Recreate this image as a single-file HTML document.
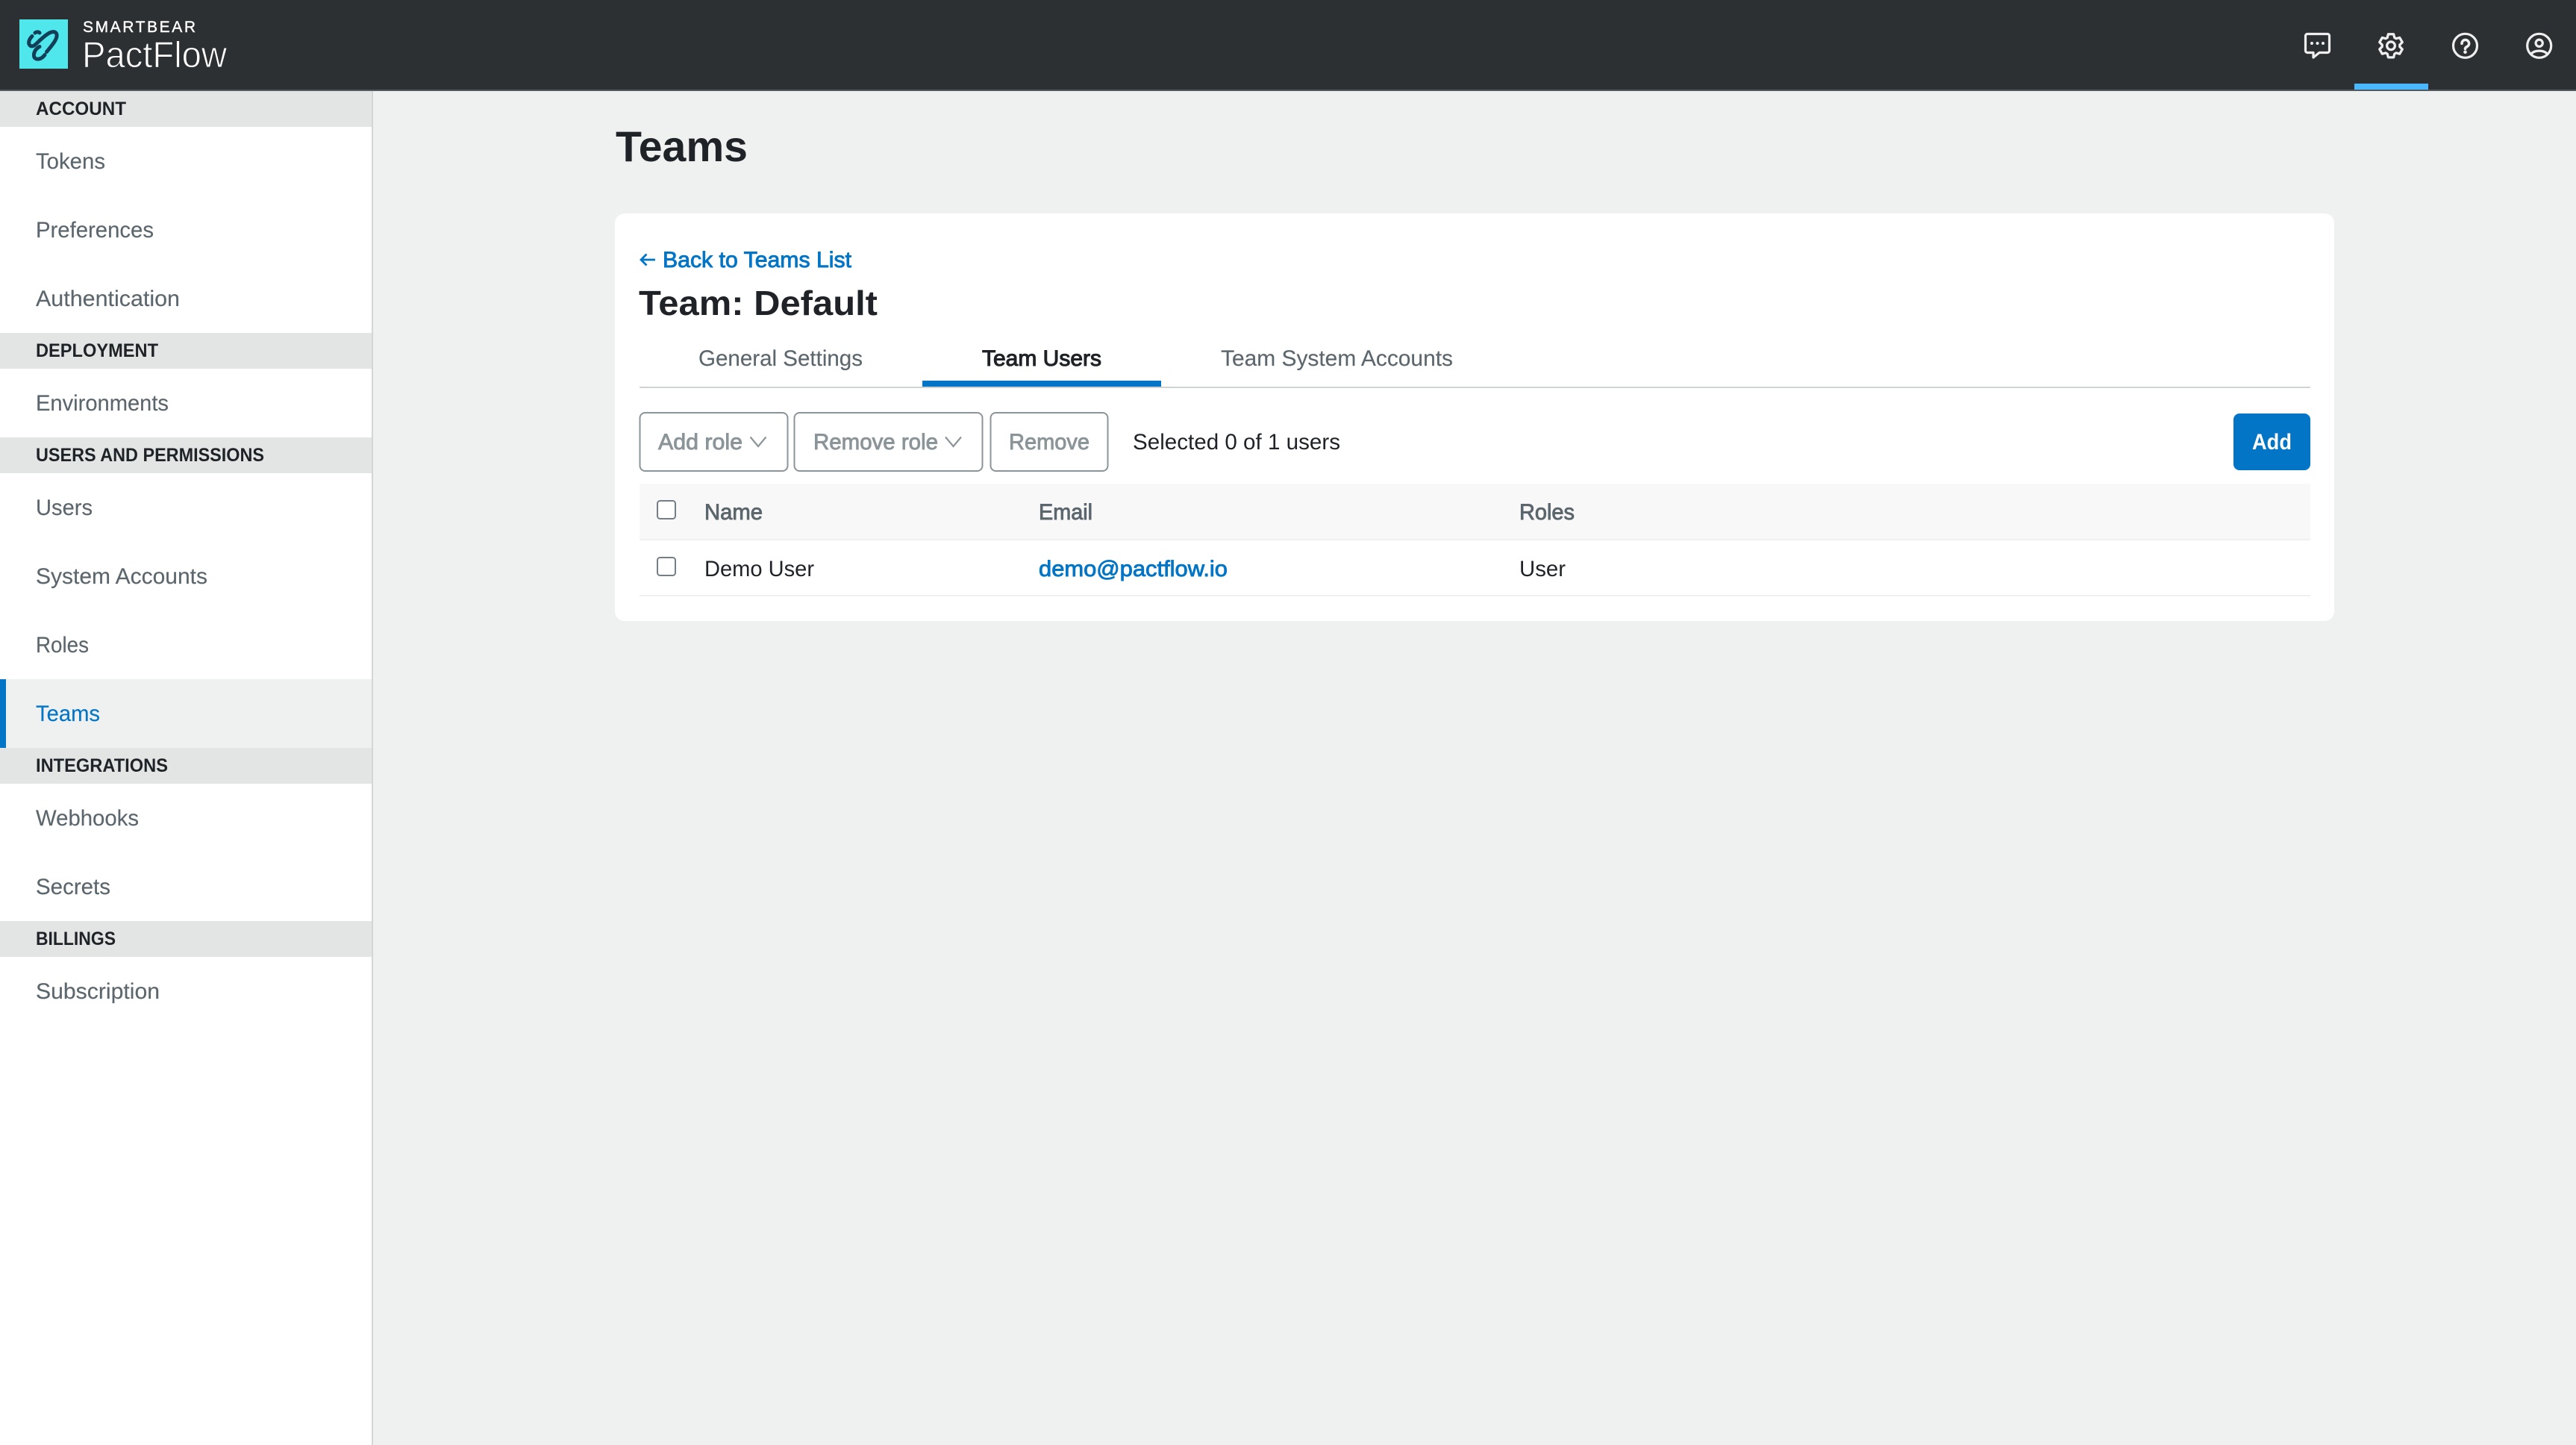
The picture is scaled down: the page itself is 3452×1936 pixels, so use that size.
<!DOCTYPE html>
<html lang="en">
<head>
<meta charset="utf-8">
<title>Teams - PactFlow</title>
<style>
html,body{margin:0;padding:0;width:3452px;height:1936px;overflow:hidden;background:#eff1f0}
svg{display:block}
text{font-family:"Liberation Sans",Arial,sans-serif;stroke-width:0;white-space:pre}
.i{font-size:30px;fill:#5b666d;stroke:#5b666d;stroke-width:.15}
.s{font-size:24.6px;font-weight:700;fill:#1f2327}
.b{font-size:30px;fill:#0275c6;stroke:#0275c6;stroke-width:.9}
.g{font-size:30px;fill:#8b9599;stroke:#8b9599;stroke-width:.9}
.h{font-size:30px;fill:#5b666d;stroke:#5b666d;stroke-width:.9}
.k{font-size:30px;fill:#1f2327}
.btn{fill:#fff;stroke:#8b9599;stroke-width:2}
.chev{fill:none;stroke:#8b9599;stroke-width:2.2}
.cb{fill:#fff;stroke:#747e84;stroke-width:2}
.ic{fill:none;stroke:#eeeeee;stroke-width:3.2;stroke-linejoin:round;stroke-linecap:round}
.logo{fill:none;stroke:#123f57;stroke-width:5;stroke-linecap:round;stroke-linejoin:round}
</style>
</head>
<body>
<svg xmlns="http://www.w3.org/2000/svg" width="3452" height="1936" viewBox="0 0 3452 1936">
<rect width="3452" height="1936" fill="#eff1f0"/>

<!-- sidebar -->
<rect x="0" y="122" width="498" height="1814" fill="#fff"/>
<rect x="498" y="122" width="2" height="1814" fill="#d3d6d5"/>
<rect x="0" y="122" width="498" height="48" fill="#e3e5e4"/>
<rect x="0" y="446" width="498" height="48" fill="#e3e5e4"/>
<rect x="0" y="586" width="498" height="48" fill="#e3e5e4"/>
<rect x="0" y="1002" width="498" height="48" fill="#e3e5e4"/>
<rect x="0" y="1234" width="498" height="48" fill="#e3e5e4"/>
<rect x="0" y="910" width="498" height="92" fill="#eff1f0"/>
<rect x="0" y="910" width="8" height="92" fill="#0275c6"/>

<text class="s" x="48" y="154" textLength="121" lengthAdjust="spacingAndGlyphs">ACCOUNT</text>
<text class="i" x="48" y="226" textLength="93" lengthAdjust="spacingAndGlyphs">Tokens</text>
<text class="i" x="48" y="318" textLength="158" lengthAdjust="spacingAndGlyphs">Preferences</text>
<text class="i" x="48" y="410" textLength="193" lengthAdjust="spacingAndGlyphs">Authentication</text>
<text class="s" x="48" y="478" textLength="164" lengthAdjust="spacingAndGlyphs">DEPLOYMENT</text>
<text class="i" x="48" y="550" textLength="178" lengthAdjust="spacingAndGlyphs">Environments</text>
<text class="s" x="48" y="618" textLength="306" lengthAdjust="spacingAndGlyphs">USERS AND PERMISSIONS</text>
<text class="i" x="48" y="690" textLength="76" lengthAdjust="spacingAndGlyphs">Users</text>
<text class="i" x="48" y="782" textLength="230" lengthAdjust="spacingAndGlyphs">System Accounts</text>
<text class="i" x="48" y="874" textLength="71" lengthAdjust="spacingAndGlyphs">Roles</text>
<text class="i" x="48" y="966" textLength="86" lengthAdjust="spacingAndGlyphs" style="fill:#0275c6;stroke:#0275c6">Teams</text>
<text class="s" x="48" y="1034" textLength="177" lengthAdjust="spacingAndGlyphs">INTEGRATIONS</text>
<text class="i" x="48" y="1106" textLength="138" lengthAdjust="spacingAndGlyphs">Webhooks</text>
<text class="i" x="48" y="1198" textLength="100" lengthAdjust="spacingAndGlyphs">Secrets</text>
<text class="s" x="48" y="1266" textLength="107" lengthAdjust="spacingAndGlyphs">BILLINGS</text>
<text class="i" x="48" y="1338" textLength="166" lengthAdjust="spacingAndGlyphs">Subscription</text>

<!-- header -->
<rect x="0" y="0" width="3452" height="120" fill="#2c3033"/>
<rect x="0" y="120" width="3452" height="2" fill="#505a5f"/>
<rect x="26" y="26" width="65" height="66" fill="#4fe6ec"/>
<path class="logo" d="M47 44C49 42.5 51.5 42.5 53 44"/>
<path class="logo" d="M43 48.5C38.5 53 37 59 41 61.5C45 63.5 49 58 54 53.5C60 48 68 41 73.500 43C77.500 45 76.500 50 73.500 55C71 59.500 66 65 62.500 69.500"/>
<path class="logo" d="M53 62.500C48 65 45 70 45.500 75C46 79 50 80 54 78.500C56.500 77.500 58.500 75.500 60 73.500"/>
<text x="111" y="43" font-size="21" fill="#fff" stroke="#fff" style="stroke-width:.4" textLength="151" lengthAdjust="spacing">SMARTBEAR</text>
<text x="110" y="90" font-size="49" fill="#fff" stroke="#2c3033" style="stroke-width:1" textLength="194" lengthAdjust="spacingAndGlyphs">PactFlow</text>

<path class="ic" d="M3092 45.5h27a2.500 2.500 0 0 1 2.500 2.500v20a2.500 2.500 0 0 1-2.500 2.500h-11l-8 6.500v-6.500h-8a2.500 2.500 0 0 1-2.500-2.500v-20a2.500 2.500 0 0 1 2.500-2.500z"/>
<circle cx="3098" cy="58" r="2" fill="#eee"/><circle cx="3105.500" cy="58" r="2" fill="#eee"/><circle cx="3113" cy="58" r="2" fill="#eee"/>

<g transform="translate(3204 61.3) scale(1.03)">
<path class="ic" d="M-4.68-10.5L-3.49-15.1H3.49L4.68-10.5L6.76-9.3L11.34-10.57L14.82-4.53L11.44-1.2V1.2L14.82 4.53L11.34 10.57L6.76 9.3L4.68 10.5L3.49 15.1H-3.49L-4.68 10.5L-6.76 9.3L-11.34 10.57L-14.82 4.53L-11.44 1.2V-1.2L-14.82-4.53L-11.34-10.57L-6.76-9.3Z"/>
<circle class="ic" cx="0" cy="0" r="5.2"/>
</g>

<rect x="3155" y="112" width="99" height="8" fill="#4ab8ff"/>

<g transform="translate(3303.5 61.3)">
<circle class="ic" cx="0" cy="0" r="16"/>
<path class="ic" style="stroke-width:3.6" d="M-4.5-3a4.800 4.800 0 1 1 7 4.200c-1.700.9-2.500 1.600-2.500 3"/>
<circle cx="0" cy="8.500" r="2.300" fill="#eee"/>
</g>
<g transform="translate(3402.7 61.3)">
<circle class="ic" cx="0" cy="0" r="16"/>
<circle class="ic" cx="0" cy="-3.6" r="4.600"/>
<path class="ic" d="M-11 11.4c2-3 6-4.600 11-4.600s9 1.600 11 4.600"/>
</g>

<!-- page title -->
<text x="825" y="216" font-size="57.5" font-weight="700" fill="#1f2327" textLength="177" lengthAdjust="spacingAndGlyphs">Teams</text>

<!-- card -->
<rect x="824" y="286" width="2304" height="546" rx="13" fill="#fff"/>

<path d="M859 348h19M866.500 340.500L859 348l7.500 7.500" fill="none" stroke="#0275c6" stroke-width="2.800"/>
<text class="b" x="888" y="358" textLength="253" lengthAdjust="spacingAndGlyphs">Back to Teams List</text>
<text x="856" y="422" font-size="46" font-weight="700" fill="#1f2327" textLength="320" lengthAdjust="spacingAndGlyphs">Team: Default</text>

<!-- tabs -->
<text class="i" x="936" y="490" textLength="220" lengthAdjust="spacingAndGlyphs">General Settings</text>
<text class="k" x="1316" y="490" textLength="160" lengthAdjust="spacingAndGlyphs" style="stroke:#1f2327;stroke-width:1.1">Team Users</text>
<text class="i" x="1636" y="490" textLength="311" lengthAdjust="spacingAndGlyphs">Team System Accounts</text>
<rect x="857" y="518" width="2239" height="2" fill="#d0d3d2"/>
<rect x="1236" y="510" width="320" height="8" fill="#0275c6"/>

<!-- toolbar -->
<rect class="btn" x="857.500" y="553" width="198" height="78" rx="7"/>
<text class="g" x="882" y="602" textLength="113" lengthAdjust="spacingAndGlyphs">Add role</text>
<path class="chev" d="M1005.500 585.500L1016 598L1026.500 585.500"/>
<rect class="btn" x="1064.500" y="553" width="252" height="78" rx="7"/>
<text class="g" x="1090" y="602" textLength="167" lengthAdjust="spacingAndGlyphs">Remove role</text>
<path class="chev" d="M1267 585.500L1277.500 598L1288 585.500"/>
<rect class="btn" x="1327.500" y="553" width="157" height="78" rx="7"/>
<text class="g" x="1352" y="602" textLength="108" lengthAdjust="spacingAndGlyphs">Remove</text>
<text class="k" x="1518" y="602" textLength="278" lengthAdjust="spacingAndGlyphs">Selected 0 of 1 users</text>
<rect x="2993" y="554" width="103" height="76" rx="8" fill="#0275c6"/>
<text x="3018" y="602" font-size="30" font-weight="700" fill="#fff" textLength="53" lengthAdjust="spacingAndGlyphs">Add</text>

<!-- table -->
<rect x="857" y="648" width="2239" height="74" fill="#f8f8f8"/>
<rect x="857" y="722" width="2239" height="2" fill="#f0f0f0"/>
<rect x="857" y="797" width="2239" height="2" fill="#f0f0f0"/>
<rect class="cb" x="881" y="671" width="24" height="24" rx="3.5"/>
<rect class="cb" x="881" y="747" width="24" height="24" rx="3.5"/>
<text class="h" x="944" y="696" textLength="78" lengthAdjust="spacingAndGlyphs">Name</text>
<text class="h" x="1392" y="696" textLength="72" lengthAdjust="spacingAndGlyphs">Email</text>
<text class="h" x="2036" y="696" textLength="74" lengthAdjust="spacingAndGlyphs">Roles</text>
<text class="k" x="944" y="772" textLength="147" lengthAdjust="spacingAndGlyphs">Demo User</text>
<text class="b" x="1392" y="772" textLength="253" lengthAdjust="spacingAndGlyphs">demo@pactflow.io</text>
<text class="k" x="2036" y="772" textLength="62" lengthAdjust="spacingAndGlyphs">User</text>
</svg>
</body>
</html>
